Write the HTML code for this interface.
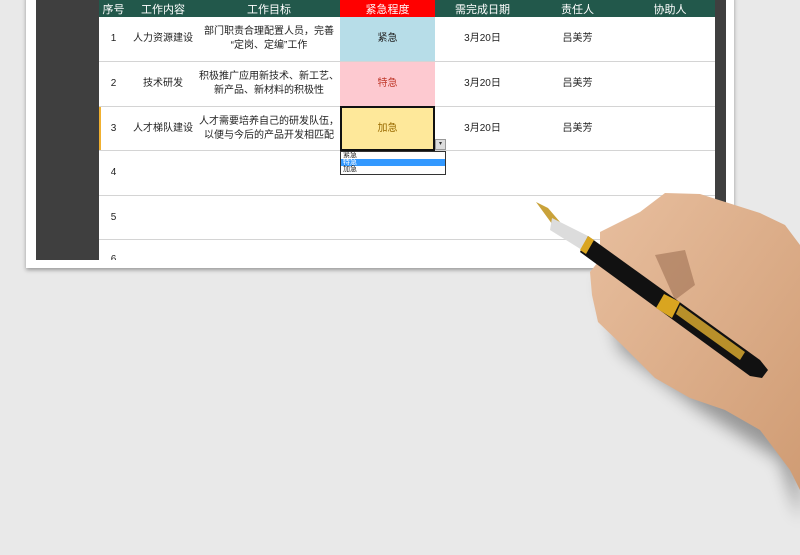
<!DOCTYPE html>
<html><head><meta charset="utf-8"><style>
body{margin:0;width:800px;height:555px;overflow:hidden;background:#e9e9e9;position:relative;font-family:"Liberation Sans","Noto Sans CJK SC",sans-serif}
.frame{position:absolute;left:26px;top:-5px;width:708px;height:273px;background:#fff;box-shadow:0 2px 4px rgba(0,0,0,.35)}
.dark{position:absolute;left:36px;top:0;width:690px;height:260px;background:#3f3f3f}
.tbl{position:absolute;left:99px;top:0;width:616px;height:260px;background:#fff;overflow:hidden}
.c{position:absolute;display:flex;align-items:center;justify-content:center;text-align:center;font-size:10px;color:#222;line-height:14px}
.h{background:#22584b;color:#fff;font-size:11px;height:17px;top:0;align-items:flex-end;line-height:13px}
.line{position:absolute;left:0;width:616px;height:1px;background:#d4d4d4}
</style></head><body>
<div class="frame"></div>
<div class="dark"></div>
<div class="tbl">
<div class="c h" style="left:0;width:29px">序号</div>
<div class="c h" style="left:29px;width:70px">工作内容</div>
<div class="c h" style="left:99px;width:142px">工作目标</div>
<div class="c h" style="left:241px;width:95px;background:#f00">紧急程度</div>
<div class="c h" style="left:336px;width:95px">需完成日期</div>
<div class="c h" style="left:431px;width:95px">责任人</div>
<div class="c h" style="left:526px;width:90px">协助人</div>
<div class="line" style="top:61px"></div><div class="line" style="top:106px"></div><div class="line" style="top:150px"></div><div class="line" style="top:195px"></div><div class="line" style="top:239px"></div>
<div style="position:absolute;left:0;top:107px;width:2px;height:43px;background:#f0b030"></div>
<div class="c" style="left:0;top:17px;width:29px;height:44px">1</div>
<div class="c" style="left:29px;top:17px;width:70px;height:44px">人力资源建设</div>
<div class="c" style="left:99px;top:17px;width:142px;height:44px">部门职责合理配置人员，完善<br>“定岗、定编”工作</div>
<div class="c" style="left:241px;top:17px;width:95px;height:44px;background:#b7dde8">紧急</div>
<div class="c" style="left:336px;top:17px;width:95px;height:44px">3月20日</div>
<div class="c" style="left:431px;top:17px;width:95px;height:44px">吕美芳</div>
<div class="c" style="left:0;top:62px;width:29px;height:44px">2</div>
<div class="c" style="left:29px;top:62px;width:70px;height:44px">技术研发</div>
<div class="c" style="left:99px;top:62px;width:142px;height:44px">积极推广应用新技术、新工艺、<br>新产品、新材料的积极性</div>
<div class="c" style="left:241px;top:62px;width:95px;height:44px;background:#fdc9d0;color:#c0392b">特急</div>
<div class="c" style="left:336px;top:62px;width:95px;height:44px">3月20日</div>
<div class="c" style="left:431px;top:62px;width:95px;height:44px">吕美芳</div>
<div class="c" style="left:0;top:107px;width:29px;height:43px">3</div>
<div class="c" style="left:29px;top:107px;width:70px;height:43px">人才梯队建设</div>
<div class="c" style="left:99px;top:107px;width:142px;height:43px">人才需要培养自己的研发队伍，<br>以便与今后的产品开发相匹配</div>
<div class="c" style="left:241px;top:106px;width:91px;height:41px;background:#fee89a;color:#9a6b00;border:2px solid #111">加急</div>
<div class="c" style="left:336px;top:107px;width:95px;height:43px">3月20日</div>
<div class="c" style="left:431px;top:107px;width:95px;height:43px">吕美芳</div>
<div class="c" style="left:0;top:151px;width:29px;height:44px">4</div>
<div class="c" style="left:0;top:196px;width:29px;height:43px">5</div>
<div class="c" style="left:0;top:250px;width:29px;height:20px">6</div>
<div style="position:absolute;left:336px;top:139px;width:9px;height:9px;background:#ddd;border:1px solid #999;font-size:6px;line-height:9px;text-align:center;color:#333">▾</div>
<div style="position:absolute;left:241px;top:151px;width:104px;height:22px;background:#fff;border:1px solid #333;font-size:7px;line-height:7px;color:#222">
<div style="padding-left:2px">紧急</div><div style="padding-left:2px;background:#3399ff;color:#fff">特急</div><div style="padding-left:2px">加急</div></div>
</div>
<svg style="position:absolute;left:0;top:0" width="800" height="555">
<defs><filter id="b"><feGaussianBlur stdDeviation="8"/></filter>
<linearGradient id="sk" x1="0" y1="0" x2="1" y2="1"><stop offset="0" stop-color="#e8bf9f"/><stop offset="1" stop-color="#d09c74"/></linearGradient></defs>
<path d="M600 280 L620 350 L700 410 L780 460 L800 520 L800 300 Z" fill="#000" opacity=".35" filter="url(#b)"/>
<path d="M600 232 L640 212 L665 193 L700 194 L760 213 L785 225 L800 245 L800 490 L790 470 L760 430 L725 410 L690 398 L655 378 L622 345 L598 322 L592 295 L590 272 L598 262 L612 262 L600 250 Z" fill="url(#sk)"/>
<path d="M655 255 L685 250 L695 285 L675 300 Z" fill="#8a5a40" opacity=".45"/>
<path d="M536 202 L548 208 L560 222 L555 228 Z" fill="#c9a23a"/>
<path d="M552 218 L588 236 L582 250 L550 230 Z" fill="#dcdcdc"/>
<path d="M588 236 L760 360 L768 370 L762 378 L750 376 L580 252 Z" fill="#111"/>
<path d="M664 294 L680 302 L672 318 L656 308 Z" fill="#d9a520"/>
<path d="M680 305 L745 352 L740 360 L676 314 Z" fill="#b8902a"/>
<path d="M588 236 L594 240 L586 254 L580 250 Z" fill="#d9a520"/>
</svg>
</body></html>
